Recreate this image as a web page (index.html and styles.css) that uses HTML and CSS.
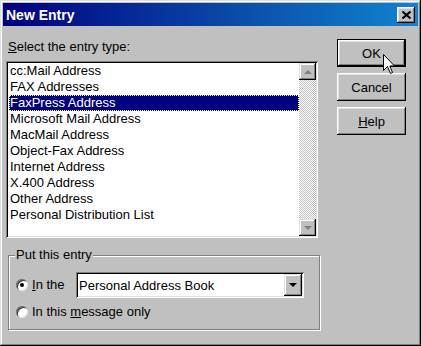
FILE: index.html
```html
<!DOCTYPE html>
<html lang="en">
<head>
<meta charset="UTF-8">
<title>New Entry</title>
<link rel="stylesheet" href="styles.css">
</head>
<body>

<div class="window">
    <div class="titlebar">
        <span class="title">New Entry</span>
        <div class="close-btn">
            <svg width="9" height="8" viewBox="0 0 9 8">
                <path d="M0.5 0.5 L8.5 7.5 M8.5 0.5 L0.5 7.5" stroke="#000" stroke-width="2"/>
            </svg>
        </div>
    </div>

    <div class="dialog">
        <div class="main">
            <div class="label"><u>S</u>elect the entry type:</div>
            <div class="listbox">
                <ul class="items">
                    <li>cc:Mail Address</li>
                    <li>FAX Addresses</li>
                    <li class="selected">FaxPress Address</li>
                    <li>Microsoft Mail Address</li>
                    <li>MacMail Address</li>
                    <li>Object-Fax Address</li>
                    <li>Internet Address</li>
                    <li>X.400 Address</li>
                    <li>Other Address</li>
                    <li>Personal Distribution List</li>
                </ul>
                <div class="scrollbar">
                    <div class="sb-btn"><span class="tri-up"></span></div>
                    <div class="sb-track"></div>
                    <div class="sb-btn"><span class="tri-down"></span></div>
                </div>
            </div>

            <fieldset class="group">
                <legend>Put this entry</legend>
                <div class="opt-row">
                    <div class="opt"><span class="radio checked"></span><span><u>I</u>n the</span></div>
                    <div class="combo">
                        <span class="combo-text">Personal Address Book</span>
                        <span class="combo-btn"><span class="tri-down dark"></span></span>
                    </div>
                </div>
                <div class="opt-row second">
                    <div class="opt"><span class="radio"></span><span>In this <u>m</u>essage only</span></div>
                </div>
            </fieldset>
        </div>

        <div class="buttons">
            <div class="btn default">OK</div>
            <div class="btn">Cancel</div>
            <div class="btn"><u>H</u>elp</div>
        </div>
    </div>

    <svg class="cursor" width="13" height="21" viewBox="0 0 13 21">
        <path d="M0.5 0.5 L0.5 16.5 L4.5 12.5 L7.5 19.5 L9.5 18.5 L6.8 12 L11.5 12 Z" fill="#fff" stroke="#000" stroke-width="1"/>
    </svg>
</div>

</body>
</html>
```

FILE: styles.css
```css
body {
    margin: 0;
    padding: 0;
    font-family: "Liberation Sans", Arial, sans-serif;
    font-size: 13px;
    color: #000;
    background: #c0c0c0;
}

.window {
    position: relative;
    width: 421px;
    height: 346px;
    box-sizing: border-box;
    padding: 3px;
    background: #c0c0c0;
    box-shadow: inset -1px -1px #000, inset 1px 1px #dfdfdf,
                inset -2px -2px #808080, inset 2px 2px #fff;
    overflow: hidden;
}

/* title bar */
.titlebar {
    height: 23px;
    display: flex;
    align-items: center;
    justify-content: space-between;
    padding: 0 3px;
    background: linear-gradient(90deg, #000080 0%, #0a4aa8 55%, #1084d0 100%);
}

.title {
    color: #fff;
    font-weight: bold;
    font-size: 14px;
}

.close-btn {
    width: 18px;
    height: 16px;
    display: flex;
    align-items: center;
    justify-content: center;
    background: #c0c0c0;
    box-shadow: inset -1px -1px #000, inset 1px 1px #fff,
                inset -2px -2px #808080, inset 2px 2px #dfdfdf;
}

/* body */
.dialog {
    display: flex;
    padding: 13px 0 0 3px;
}

.main {
    width: 312px;
}

.label {
    line-height: 16px;
    padding-left: 2px;
}

.listbox {
    margin-top: 6px;
    height: 177px;
    box-sizing: border-box;
    padding: 2px;
    display: flex;
    background: #fff;
    box-shadow: inset 1px 1px #808080, inset -1px -1px #fff,
                inset 2px 2px #000, inset -2px -2px #dfdfdf;
}

.items {
    flex: 1;
    list-style: none;
    margin: 0;
    padding: 0;
}

.items li {
    line-height: 16px;
    height: 16px;
    margin-left: 1px;
    padding-left: 1px;
    white-space: nowrap;
}

.items li.selected {
    background: #000080;
    color: #fff;
    outline: 1px dotted #ffff80;
    outline-offset: -1px;
}

.scrollbar {
    width: 17px;
    display: flex;
    flex-direction: column;
}

.sb-btn {
    height: 17px;
    display: flex;
    align-items: center;
    justify-content: center;
    background: #c0c0c0;
    box-shadow: inset -1px -1px #000, inset 1px 1px #dfdfdf,
                inset -2px -2px #808080, inset 2px 2px #fff;
}

.sb-track {
    flex: 1;
    background: repeating-conic-gradient(#c0c0c0 0 25%, #fff 0 50%) 0 0 / 2px 2px;
}

.tri-up {
    width: 0;
    height: 0;
    border-left: 4px solid transparent;
    border-right: 4px solid transparent;
    border-bottom: 4px solid #808080;
}

.tri-down {
    width: 0;
    height: 0;
    border-left: 4px solid transparent;
    border-right: 4px solid transparent;
    border-top: 4px solid #808080;
}

.tri-down.dark {
    border-top-color: #000;
}

/* group box */
.group {
    margin: 9px 0 0 2px;
    padding: 9px 7px 9px 7px;
    width: 312px;
    box-sizing: border-box;
    border: 1px solid #808080;
    box-shadow: inset 1px 1px #fff, 1px 1px #fff;
    min-width: 0;
}

.group legend {
    padding: 0 1px;
    margin-left: -1px;
    line-height: 16px;
    background: #c0c0c0;
}

.opt-row {
    display: flex;
    align-items: center;
    height: 26px;
}

.opt-row.second {
    height: 16px;
    margin-top: 6px;
}

.opt {
    width: 60px;
    display: flex;
    align-items: center;
    gap: 4px;
    white-space: nowrap;
    line-height: 16px;
}

.radio {
    width: 12px;
    height: 12px;
    border-radius: 50%;
    box-sizing: border-box;
    background: #fff;
    box-shadow: inset 1px 1px #808080, inset -1px -1px #dfdfdf,
                inset 2px 2px #404040;
    position: relative;
    flex: none;
}

.radio.checked::after {
    content: "";
    position: absolute;
    left: 4px;
    top: 4px;
    width: 4px;
    height: 4px;
    border-radius: 50%;
    background: #000;
}

.combo {
    width: 228px;
    height: 26px;
    box-sizing: border-box;
    padding: 2px;
    display: flex;
    align-items: center;
    background: #fff;
    box-shadow: inset 1px 1px #808080, inset -1px -1px #fff,
                inset 2px 2px #000, inset -2px -2px #dfdfdf;
}

.combo-text {
    flex: 1;
    padding-left: 1px;
}

.combo-btn {
    width: 18px;
    height: 22px;
    display: flex;
    align-items: center;
    justify-content: center;
    background: #c0c0c0;
    box-shadow: inset -1px -1px #000, inset 1px 1px #dfdfdf,
                inset -2px -2px #808080, inset 2px 2px #fff;
}

/* buttons */
.buttons {
    margin-left: 19px;
    width: 69px;
    display: flex;
    flex-direction: column;
    gap: 6px;
}

.btn {
    height: 28px;
    display: flex;
    align-items: center;
    justify-content: center;
    background: #c0c0c0;
    box-shadow: inset -1px -1px #000, inset 1px 1px #fff,
                inset -2px -2px #808080, inset 2px 2px #dfdfdf;
}

.btn.default {
    box-shadow: inset 0 0 0 1px #000, inset -2px -2px #000, inset 2px 2px #fff,
                inset -3px -3px #808080, inset 3px 3px #dfdfdf;
}

.cursor {
    position: absolute;
    left: 383px;
    top: 54px;
}
```
